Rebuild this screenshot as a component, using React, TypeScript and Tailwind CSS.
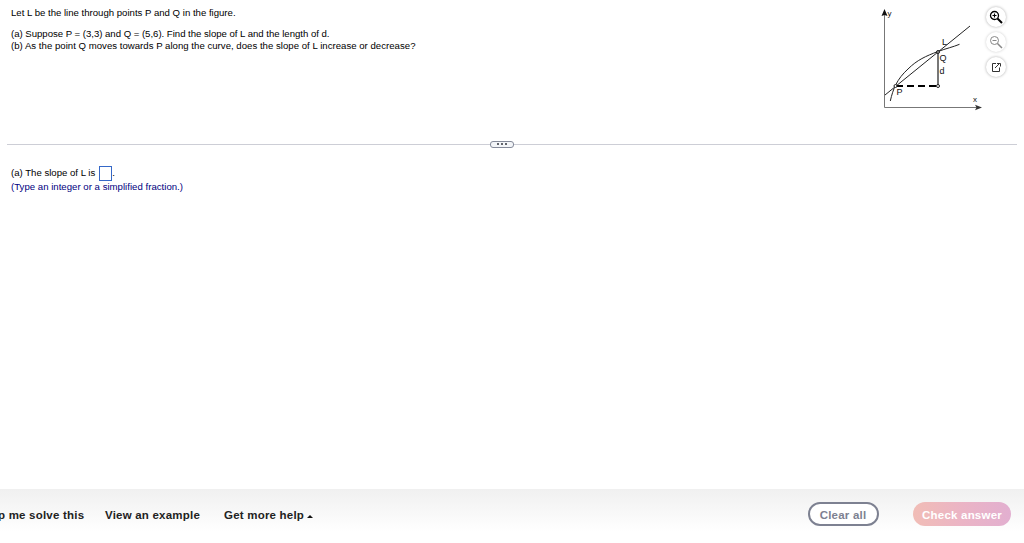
const Figure = () => {
  return (
    <svg
      className="shrink-0 font-['Liberation_Sans',Arial,sans-serif]"
      width="110"
      height="110"
      viewBox="876 4 110 110"
      fill="none"
      stroke="#222"
      strokeWidth="1"
    >
      <path d="M884.5 12V107.5H978" stroke="#777" />
      <path d="M884.5 9l-3 7 3-1 3 1z" fill="#111" stroke="none" />
      <path d="M982 107.5l-7-2.8 1.5 2.8-1.5 2.8z" fill="#333" stroke="none" />
      <path d="M885 95L970 26" />
      <path d="M890.3 101C893 89 897 79 908 69C917 60 926 56 938 51.5C946 48.5 953 47 959.5 44.3" />
      <path d="M938 53V86" stroke="#777" strokeWidth="2" />
      <path d="M896 86H937" stroke="#000" strokeWidth="2" strokeDasharray="7 4" />
      <circle cx="895.5" cy="86" r="1.5" fill="#fff" />
      <circle cx="938" cy="52" r="1.5" fill="#999" />
      <circle cx="938" cy="86" r="1.5" fill="#fff" />
      <g fill="#111" stroke="none" fontSize="9">
        <text x="887.5" y="16" fontSize="8">y</text>
        <text x="942" y="45">L</text>
        <text x="939.5" y="61">Q</text>
        <text x="939.5" y="74">d</text>
        <text x="896.5" y="95">P</text>
        <text x="973" y="102" fontSize="8">x</text>
      </g>
    </svg>
  );
};

const Magnifier = ({ plus = false }: { plus?: boolean }) => {
  return (
    <svg width="14" height="14" viewBox="0 0 14 14" fill="none" stroke="currentColor">
      <circle cx="5.5" cy="5.5" r="4" strokeWidth={plus ? 1.3 : 1} />
      <path d={plus ? "M3.5 5.5h4M5.5 3.5v4" : "M3.5 5.5h4"} strokeWidth={plus ? 1.1 : 1} />
      <path d="M8.5 8.5l4.5 4.5" strokeWidth={plus ? 2 : 1.5} />
    </svg>
  );
};

const App = () => {
  return (
    <div className="flex h-[543px] w-[1024px] flex-col overflow-hidden bg-white font-['Liberation_Sans',Arial,sans-serif] text-[9.6px] leading-3 text-black">
      <section className="flex h-[139px] justify-between pr-[18px]">
        <div className="pl-[11px] pt-[7px] whitespace-nowrap">
          <p>Let L be the line through points P and Q in the figure.</p>
          <p className="mt-[9px] tracking-[-0.02px]">
            (a) Suppose P = (3,3) and Q = (5,6). Find the slope of L and the length of d.
          </p>
          <p className="tracking-[0.02px]">
            (b) As the point Q moves towards P along the curve, does the slope of L increase or decrease?
          </p>
        </div>
        <div className="flex">
          <div className="pt-1">
            <Figure />
          </div>
          <div className="flex flex-col gap-[5px] pt-[7px]">
            <button className="flex size-5 items-center justify-center rounded-full bg-white text-black shadow-[0_0_3px_#aaa]">
              <Magnifier plus />
            </button>
            <button className="flex size-5 items-center justify-center rounded-full bg-white text-[#888] shadow-[0_0_3px_#ccc]">
              <Magnifier />
            </button>
            <button className="flex size-5 items-center justify-center rounded-full bg-white text-[#333] shadow-[0_0_3px_#aaa]">
              <svg width="10" height="10" viewBox="0 0 10 10" fill="none" stroke="currentColor">
                <path d="M5 1.5H1.5v8h7V5.5M4 6l4.5-4.5M6 1.5h3.500v3" />
              </svg>
            </button>
          </div>
        </div>
      </section>

      <div className="flex h-[10px] items-center px-[7px]">
        <div className="h-px w-[483px] bg-[#cdced6]" />
        <button className="flex h-[7px] w-6 items-center justify-center gap-[2px] rounded-[3px] border border-[#858b9a] bg-[#f3f5f8]">
          <span className="h-[2px] w-[2px] bg-[#62656c]" />
          <span className="h-[2px] w-[2px] bg-[#62656c]" />
          <span className="h-[2px] w-[2px] bg-[#62656c]" />
        </button>
        <div className="h-px flex-1 bg-[#cdced6]" />
      </div>

      <section className="flex-1 pl-[11px] pt-4 whitespace-nowrap">
        <div className="flex h-4 items-center">
          <span>(a) The slope of L is</span>
          <span className="ml-1 h-[15px] w-[13px] border border-[#3568c8] bg-white" />
          <span>.</span>
        </div>
        <p className="tracking-[0.02px] text-[#000080]">(Type an integer or a simplified fraction.)</p>
      </section>

      <footer className="flex h-[54px] items-start justify-between bg-linear-to-b from-[#f0f0f0] to-white to-80% pr-[13px] pt-[13px] text-[11.5px] font-bold tracking-[0.21px] text-[#222]">
        <nav className="flex h-[26px] items-center whitespace-nowrap">
          <a className="-ml-[2px] w-[107px]">p me solve this</a>
          <a className="w-[119px]">View an example</a>
          <a className="flex items-center gap-[3px]">
            Get more help
            <svg className="mt-[2px]" width="6" height="3" viewBox="0 0 6 3">
              <path d="M0 3L3 0l3 3z" fill="#111" />
            </svg>
          </a>
        </nav>
        <div className="flex gap-[34px]">
          <button className="h-6 w-[71px] rounded-full border-2 border-[#7d8191] bg-white pt-px pr-px text-[#7d8191]">
            Clear all
          </button>
          <button className="h-6 w-[98px] rounded-full bg-linear-to-r from-[#f1bdb6] via-[#ebb4c5] to-[#e2afd0] pt-px text-white">
            Check answer
          </button>
        </div>
      </footer>
    </div>
  );
};

export default App;
